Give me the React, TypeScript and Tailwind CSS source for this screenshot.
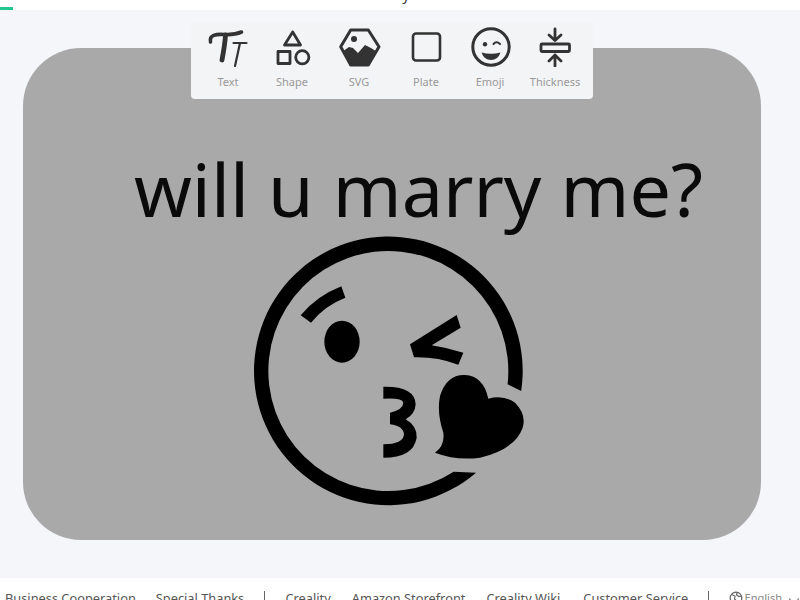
import React from "react";

const TextIcon = () => (
  <svg width="48" height="40" viewBox="0 0 48 40" fill="none" stroke="#333" strokeLinecap="round">
    <path d="M6.500 15 C5 8 12 7 20 7.500 C27 8 33 7 37.500 5" strokeWidth="3.600" />
    <path d="M21.500 8 C21 16 19.500 25 18 33" strokeWidth="4.800" />
    <path d="M29.500 16 H42.500" strokeWidth="2.200" />
    <path d="M36 16 L31 39" strokeWidth="2.200" />
  </svg>
);

const ShapeIcon = () => (
  <svg width="48" height="40" viewBox="0 0 48 40" fill="none" stroke="#333" strokeWidth="2.800" strokeLinejoin="round">
    <path d="M24.700 5 L16.500 18 H32.500 Z" />
    <rect x="10" y="24.500" width="12" height="12" />
    <circle cx="34.300" cy="30.300" r="6.600" />
  </svg>
);

const SvgIcon = () => (
  <svg width="48" height="40" viewBox="0 0 48 40" fill="none">
    <path d="M5.700 19.700 L15.700 3 H33.300 L44 19.700 L33.300 38 H15.700 Z" stroke="#333" strokeWidth="3" strokeLinejoin="round" />
    <circle cx="19" cy="12" r="3" fill="#333" />
    <path d="M9 23.500 L14 20 L18 21 L23 26 L30 18 L36 21 L41.500 24.500 L33 38 H16 Z" fill="#333" />
  </svg>
);

const PlateIcon = () => (
  <svg width="48" height="40" viewBox="0 0 48 40" fill="none">
    <rect x="11" y="6.500" width="27" height="27" rx="3" stroke="#333" strokeWidth="2.600" />
  </svg>
);

const EmojiIcon = () => (
  <svg width="48" height="40" viewBox="0 0 48 40" fill="none">
    <circle cx="25" cy="20" r="18.200" stroke="#333" strokeWidth="3" />
    <circle cx="19" cy="17.300" r="2.200" fill="#333" />
    <path d="M27.500 17 Q30.500 13.500 34 17" stroke="#333" strokeWidth="2" strokeLinecap="round" />
    <path d="M15.500 25.500 Q25 28 34.500 25.500 Q32 33 25 33 Q18 33 15.500 25.500 Z" fill="#333" />
  </svg>
);

const ThicknessIcon = () => (
  <svg width="48" height="40" viewBox="0 0 48 40" fill="none" stroke="#333" strokeWidth="2.800" strokeLinecap="round" strokeLinejoin="round">
    <rect x="10" y="17" width="28.500" height="7.500" rx="1" />
    <path d="M24 2 V13.500 M18 8 L24 13.500 L30 8" />
    <path d="M24 39 V28 M18 34 L24 28 L30 34" />
  </svg>
);

const tools = [
  { label: "Text", width: "w-[64px]", icon: <TextIcon /> },
  { label: "Shape", width: "w-[64px]", icon: <ShapeIcon /> },
  { label: "SVG", width: "w-[70px]", icon: <SvgIcon /> },
  { label: "Plate", width: "w-[64px]", icon: <PlateIcon /> },
  { label: "Emoji", width: "w-[64px]", icon: <EmojiIcon /> },
  { label: "Thickness", width: "w-[66px]", icon: <ThicknessIcon /> },
];

// blowing-a-kiss face placed on the plate
const KissFace = () => (
  <svg width="300" height="290" viewBox="0 0 900 870" fill="#000">
    <path d="M843.500 495 A403 403 0 1 0 708 740 L641 737 A360 360 0 1 1 802.800 475 Z" />
    <path d="M182 268 Q230 210 304 181 L316 215 Q255 238 213 290 Z" />
    <ellipse cx="306" cy="347" rx="53" ry="63" />
    <path d="M510 355 L650 267 L662 305 L575 358 Q620 365 670 380 L655 416 Q590 392 522 394 Z" />
    <path d="M430 482 Q525 480 527 535 Q525 565 497 580 Q532 600 530 635 Q520 695 430 695 L430 655 Q490 655 492 625 Q490 600 450 595 L450 560 Q490 550 490 530 Q488 515 430 518 Z" />
    <path d="M585 680 Q615 660 610 620 Q590 560 600 510 Q620 445 675 447 Q730 450 745 518 Q790 505 825 530 Q860 565 848 605 Q825 670 720 695 Q650 705 585 680 Z" />
  </svg>
);

const Globe = () => (
  <svg width="14" height="14" viewBox="0 0 14 14" fill="none" stroke="#666" strokeWidth="1.200">
    <circle cx="7" cy="7" r="5.800" />
    <path d="M2.500 3.500 L6 5 L5.500 8 L7.500 10 L7 12.800 M8 1.500 L7.500 4 L10 5.500 L12.500 5" />
  </svg>
);

const Chevron = () => (
  <svg width="12" height="8" viewBox="0 0 12 8" fill="none" stroke="#888" strokeWidth="1.200">
    <path d="M1 1.500 L6 6.500 L11 1.500" />
  </svg>
);

export default function App() {
  return (
    <main className="relative flex flex-col w-[800px] h-[600px] overflow-hidden bg-[#f5f6fa] font-['Noto_Sans',sans-serif]">
      {/* HEADER */}
      <header className="relative h-[10px] bg-white flex justify-center overflow-hidden shrink-0">
        <span className="ml-[12px] -mt-[15px] text-[14px] leading-[20px] text-[#333]">y</span>
        <div className="absolute left-0 bottom-0 w-[13px] h-[3px] bg-[#1fc78f]"></div>
      </header>

      {/* CANVAS */}
      <section className="flex-1 px-[23px] pt-[38px] pr-[39px]">
        <div className="h-[492px] bg-[#a9a9a9] rounded-[58px] flex flex-col items-center">
          <div className="ml-[53px] mt-[86px] h-[110px] text-[73.7px] leading-[110px] text-[#0a0a0a] whitespace-nowrap">
            will u marry me?
          </div>
          <div className="-mt-[18px] -ml-[4px]">
            <KissFace />
          </div>
        </div>
      </section>

      {/* TOOLBAR */}
      <div className="absolute left-[191px] top-[22px] w-[402px] h-[77px] px-[5px] pt-[5px] flex bg-[#f3f4f6] rounded-[4px]">
        {tools.map((tool) => (
          <div key={tool.label} className={`${tool.width} flex flex-col items-center`}>
            {tool.icon}
            <span className="mt-[7px] text-[11px] leading-[16px] text-[#999999] whitespace-nowrap">
              {tool.label}
            </span>
          </div>
        ))}
      </div>

      {/* FOOTER */}
      <footer className="h-[22px] bg-white shrink-0 flex items-start pl-[5px] pt-[10px] text-[12.8px] leading-[20px] text-[#555555] whitespace-nowrap overflow-hidden">
        <span>Business Cooperation</span>
        <span className="ml-[20px]">Special Thanks</span>
        <span className="ml-[20px] mt-[3px] w-px h-[14px] bg-[#666666]"></span>
        <span className="ml-[21px]">Creality</span>
        <span className="ml-[21px]">Amazon Storefront</span>
        <span className="ml-[21px]">Creality Wiki</span>
        <span className="ml-[23px]">Customer Service</span>
        <span className="ml-[20px] mt-[3px] w-px h-[14px] bg-[#666666]"></span>
        <span className="ml-[20px] mt-[3px]"><Globe /></span>
        <span className="ml-[2px] text-[11px] text-[#888888]">English</span>
        <span className="ml-[6px] mt-[9px]"><Chevron /></span>
      </footer>
    </main>
  );
}
